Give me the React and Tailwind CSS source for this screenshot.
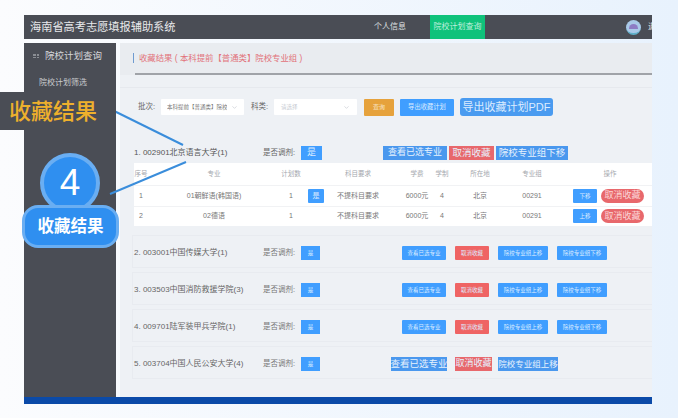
import { ChevronDown } from 'lucide-react';

const font = { fontFamily: '"Liberation Sans", "Noto Sans CJK SC", sans-serif' };

const groups = [
  { name: '2. 003001中国传媒大学(1)' },
  { name: '3. 003503中国消防救援学院(3)' },
  { name: '4. 009701陆军装甲兵学院(1)' },
];

const majors = [
  { no: 1, name: '01朝鲜语(韩国语)', move: '下移', swap: true },
  { no: 2, name: '02德语', move: '上移' },
];

const tableCols = 'grid grid-cols-[14px_132px_22px_24px_64px_42px_20px_56px_48px_96px] items-center';

function SmallBtn({ w, color = 'bg-[#409eff]', children }) {
  return (
    <div className={`${w} ${color} h-[14px] shrink-0 rounded-[1px] flex items-center justify-center text-[5.5px] text-[#dcecff]`}>
      {children}
    </div>
  );
}

function BigBtn({ w, color = 'bg-[#4a98ee]', size = 'text-[9.5px]', children }) {
  return (
    <div className={`${w} ${color} ${size} h-[14px] shrink-0 flex items-center justify-center whitespace-nowrap text-[#e6f1fd]`}>
      {children}
    </div>
  );
}

function GroupRow({ name, children }) {
  return (
    <div className="ml-[12px] flex flex-col border-y border-l border-[#e8ebf0] pl-[1px] pt-[10px] pb-[7px] mb-[4px]">
      <div className="flex items-center h-[14px]">
        <div className="w-[129px] text-[8px] text-[#666]">{name}</div>
        <div className="w-[38px] text-[7.5px] text-[#777]">是否调剂:</div>
        <div className="w-[19px] text-[5.5px] h-[14px] bg-[#409eff] flex items-center justify-center text-[#dcecff]">是</div>
        {children}
      </div>
    </div>
  );
}

function NormalButtons() {
  return (
    <div className="flex gap-[9px] ml-[82px]">
      <SmallBtn w="w-[44px]">查看已选专业</SmallBtn>
      <SmallBtn w="w-[34px]" color="bg-[#ef6464]">取消收藏</SmallBtn>
      <SmallBtn w="w-[50px]">院校专业组上移</SmallBtn>
      <SmallBtn w="w-[50px]">院校专业组下移</SmallBtn>
    </div>
  );
}

export default function App() {
  return (
    <div style={font} className="relative w-[678px] h-[418px] overflow-hidden bg-gradient-to-r from-[#fbfcfe] to-[#e8f2fd] pt-[15px] pl-[24px]">
      <div className="w-[628px]">
        {/* top bar */}
        <div className="h-[24px] bg-[#4a4d55] flex items-center overflow-hidden">
          <div className="ml-[6px] w-[344px] shrink-0 text-[11.2px] text-[#e8e9eb]">海南省高考志愿填报辅助系统</div>
          <div className="text-[8px] text-[#dfe0e2] w-[56px] shrink-0">个人信息</div>
          <div className="h-[24px] w-[55px] shrink-0 bg-[#0fc27b] flex items-center justify-center text-[8px] text-[#bdeedb]">院校计划查询</div>
          <div className="ml-[141px] w-[15px] h-[15px] shrink-0 rounded-full bg-[#a9c9e8] border-b-2 border-[#5fb0c9] flex items-center justify-center">
            <div className="w-[9px] h-[5px] rounded-t-full bg-[#8d7cc4]" />
          </div>
          <div className="ml-[7px] text-[8px] text-[#e8e9eb] shrink-0">退</div>
        </div>

        <div className="mt-[4px] flex h-[354px]">
          {/* sidebar */}
          <div className="w-[92px] bg-[#4a4d55] shrink-0">
            <div className="flex items-center mt-[6px] h-[14px] ml-[9px]">
              <div className="w-[6px] grid grid-cols-2 gap-[1px]">
                <div className="h-[1.5px] bg-[#8a8d93]" />
                <div className="h-[1.5px] bg-[#8a8d93]" />
                <div className="h-[1.5px] bg-[#8a8d93]" />
                <div className="h-[1.5px] bg-[#8a8d93]" />
              </div>
              <div className="ml-[6px] text-[9.5px] text-[#d5d6d9]">院校计划查询</div>
            </div>
            <div className="mt-[14px] ml-[15px] text-[8px] text-[#c9cbce]">院校计划筛选</div>
          </div>

          {/* main */}
          <div className="ml-[4px] flex-1 bg-[#eef1f5] flex flex-col overflow-hidden">
            <div className="bg-[#e9ecf0]">
              <div className="h-[32px] ml-[15px] border-b-2 border-[#a0a3a8] flex items-center">
                <div className="-ml-[2px] w-[1px] h-[10px] bg-[#6f9bd0]" />
                <div className="ml-[5px] text-[8.4px] text-[#e2727a] whitespace-nowrap">收藏结果 ( 本科提前【普通类】院校专业组 )</div>
              </div>
            </div>
            <div className="mt-[12px] border-t border-[#e6e9ee]" />

            {/* filter row */}
            <div className="mt-[10px] ml-[18px] h-[18px] flex items-center">
              <div className="w-[23px] text-[7.5px] text-[#666]">批次:</div>
              <div className="w-[83px] h-[16px] bg-white rounded-[1px] flex items-center justify-between px-[6px]">
                <span className="text-[5.5px] text-[#777] whitespace-nowrap overflow-hidden w-[60px]">本科提前【普通类】院校</span>
                <ChevronDown size={7} className="text-[#c0c4cc]" />
              </div>
              <div className="ml-[7px] w-[23px] text-[7.5px] text-[#666]">科类:</div>
              <div className="w-[83px] h-[16px] bg-white rounded-[1px] flex items-center justify-between px-[7px]">
                <span className="text-[5.5px] text-[#c8ccd3]">请选择</span>
                <ChevronDown size={7} className="text-[#c0c4cc]" />
              </div>
              <div className="ml-[7px] w-[30px] h-[17px] bg-[#e6a23c] rounded-[1px] flex items-center justify-center text-[6px] text-[#f8e3c2]">查询</div>
              <div className="ml-[6px] w-[54px] h-[17px] bg-[#409eff] rounded-[1px] flex items-center justify-center text-[6.3px] text-[#dcecff]">导出收藏计划</div>
              <div className="ml-[6px] w-[93px] h-[18px] bg-[#4a9bf0] rounded-[3px] flex items-center justify-center text-[11px] text-[#dcecff] whitespace-nowrap">导出收藏计划PDF</div>
            </div>

            {/* first group with table */}
            <div className="mt-[30px] ml-[14px] h-[14px] flex items-center">
              <div className="w-[129px] text-[8px] text-[#555]">1. 002901北京语言大学(1)</div>
              <div className="w-[38px] text-[7.5px] text-[#666]">是否调剂:</div>
              <div className="w-[21px] h-[14px] bg-[#409eff] flex items-center justify-center text-[9px] text-[#dcecff]">是</div>
              <div className="flex gap-[2px] ml-[61px]">
                <BigBtn w="w-[64px]" size="text-[9px]">查看已选专业</BigBtn>
                <BigBtn w="w-[45px]" color="bg-[#e8686c]">取消收藏</BigBtn>
                <BigBtn w="w-[72px]">院校专业组下移</BigBtn>
              </div>
            </div>

            <div className="mt-[3px] ml-[14px] bg-white flex flex-col">
              <div className={`${tableCols} h-[22px] text-center text-[6.5px] text-[#a4a7ad]`}>
                <div>序号</div>
                <div>专业</div>
                <div className="whitespace-nowrap">计划数</div>
                <div />
                <div>科目要求</div>
                <div className="pl-[12px]">学费</div>
                <div>学制</div>
                <div>所在地</div>
                <div>专业组</div>
                <div className="pl-[12px]">操作</div>
              </div>
              {majors.map((m) => (
                <div key={m.no} className={`${tableCols} h-[20.5px] text-center text-[7px] text-[#777] border-t border-[#f1f2f4]`}>
                  <div>{m.no}</div>
                  <div>{m.name}</div>
                  <div>1</div>
                  <div className="pl-[6px]">
                    {m.swap && <div className="w-[16px] h-[14px] bg-[#409eff] rounded-[1px] flex items-center justify-center text-[7px] text-[#dcecff]">是</div>}
                  </div>
                  <div className="whitespace-nowrap">不提科目要求</div>
                  <div className="pl-[12px] whitespace-nowrap">6000元</div>
                  <div>4</div>
                  <div>北京</div>
                  <div>00291</div>
                  <div className="flex items-center pl-[17px] gap-[4px]">
                    <div className="w-[24px] h-[14px] bg-[#409eff] rounded-[1px] flex items-center justify-center text-[5.5px] text-[#dcecff]">{m.move}</div>
                    <div className="w-[43px] h-[14px] bg-[#e8686c] rounded-full flex items-center justify-center text-[9px] text-[#fbd5d6] whitespace-nowrap">取消收藏</div>
                  </div>
                </div>
              ))}
            </div>

            {/* other groups */}
            <div className="mt-[9px]">
              {groups.map((g) => (
                <GroupRow key={g.name} name={g.name}>
                  <NormalButtons />
                </GroupRow>
              ))}
              <GroupRow name="5. 003704中国人民公安大学(4)">
                <div className="flex ml-[71px]">
                  <BigBtn w="w-[56px]">查看已选专业</BigBtn>
                  <BigBtn w="w-[37px] ml-[8px]" color="bg-[#e8686c]" size="text-[9px]">取消收藏</BigBtn>
                  <BigBtn w="w-[60px] ml-[6px]" size="text-[8.5px]">院校专业组上移</BigBtn>
                </div>
              </GroupRow>
            </div>
          </div>
        </div>
        <div className="h-[7px] bg-[#0b4aa8]" />
      </div>

      {/* callout overlays */}
      <svg className="absolute left-0 top-0" width="678" height="418">
        <line x1="100" y1="104" x2="183" y2="145" stroke="#3a8ddb" strokeWidth="2" />
        <line x1="110" y1="194" x2="186" y2="162" stroke="#3a8ddb" strokeWidth="2" />
      </svg>
      <div className="absolute left-0 top-[92px] w-[116px] h-[38px] bg-[#4a4d55] flex items-center pl-[9px] text-[22px] font-medium text-[#eeb02c] whitespace-nowrap">收藏结果</div>
      <div className="absolute left-[40px] top-[153px] w-[60px] h-[60px] rounded-full bg-[#2f8ff0] border-[4px] border-[#6aaef2] flex items-center justify-center text-[37px] text-white">4</div>
      <div className="absolute left-[22px] top-[205px] w-[97px] h-[43px] rounded-[16px] bg-[#2f8ff0] border-[3px] border-[#6aaef2] flex items-center justify-center text-[16.5px] font-bold text-white whitespace-nowrap">收藏结果</div>
    </div>
  );
}
